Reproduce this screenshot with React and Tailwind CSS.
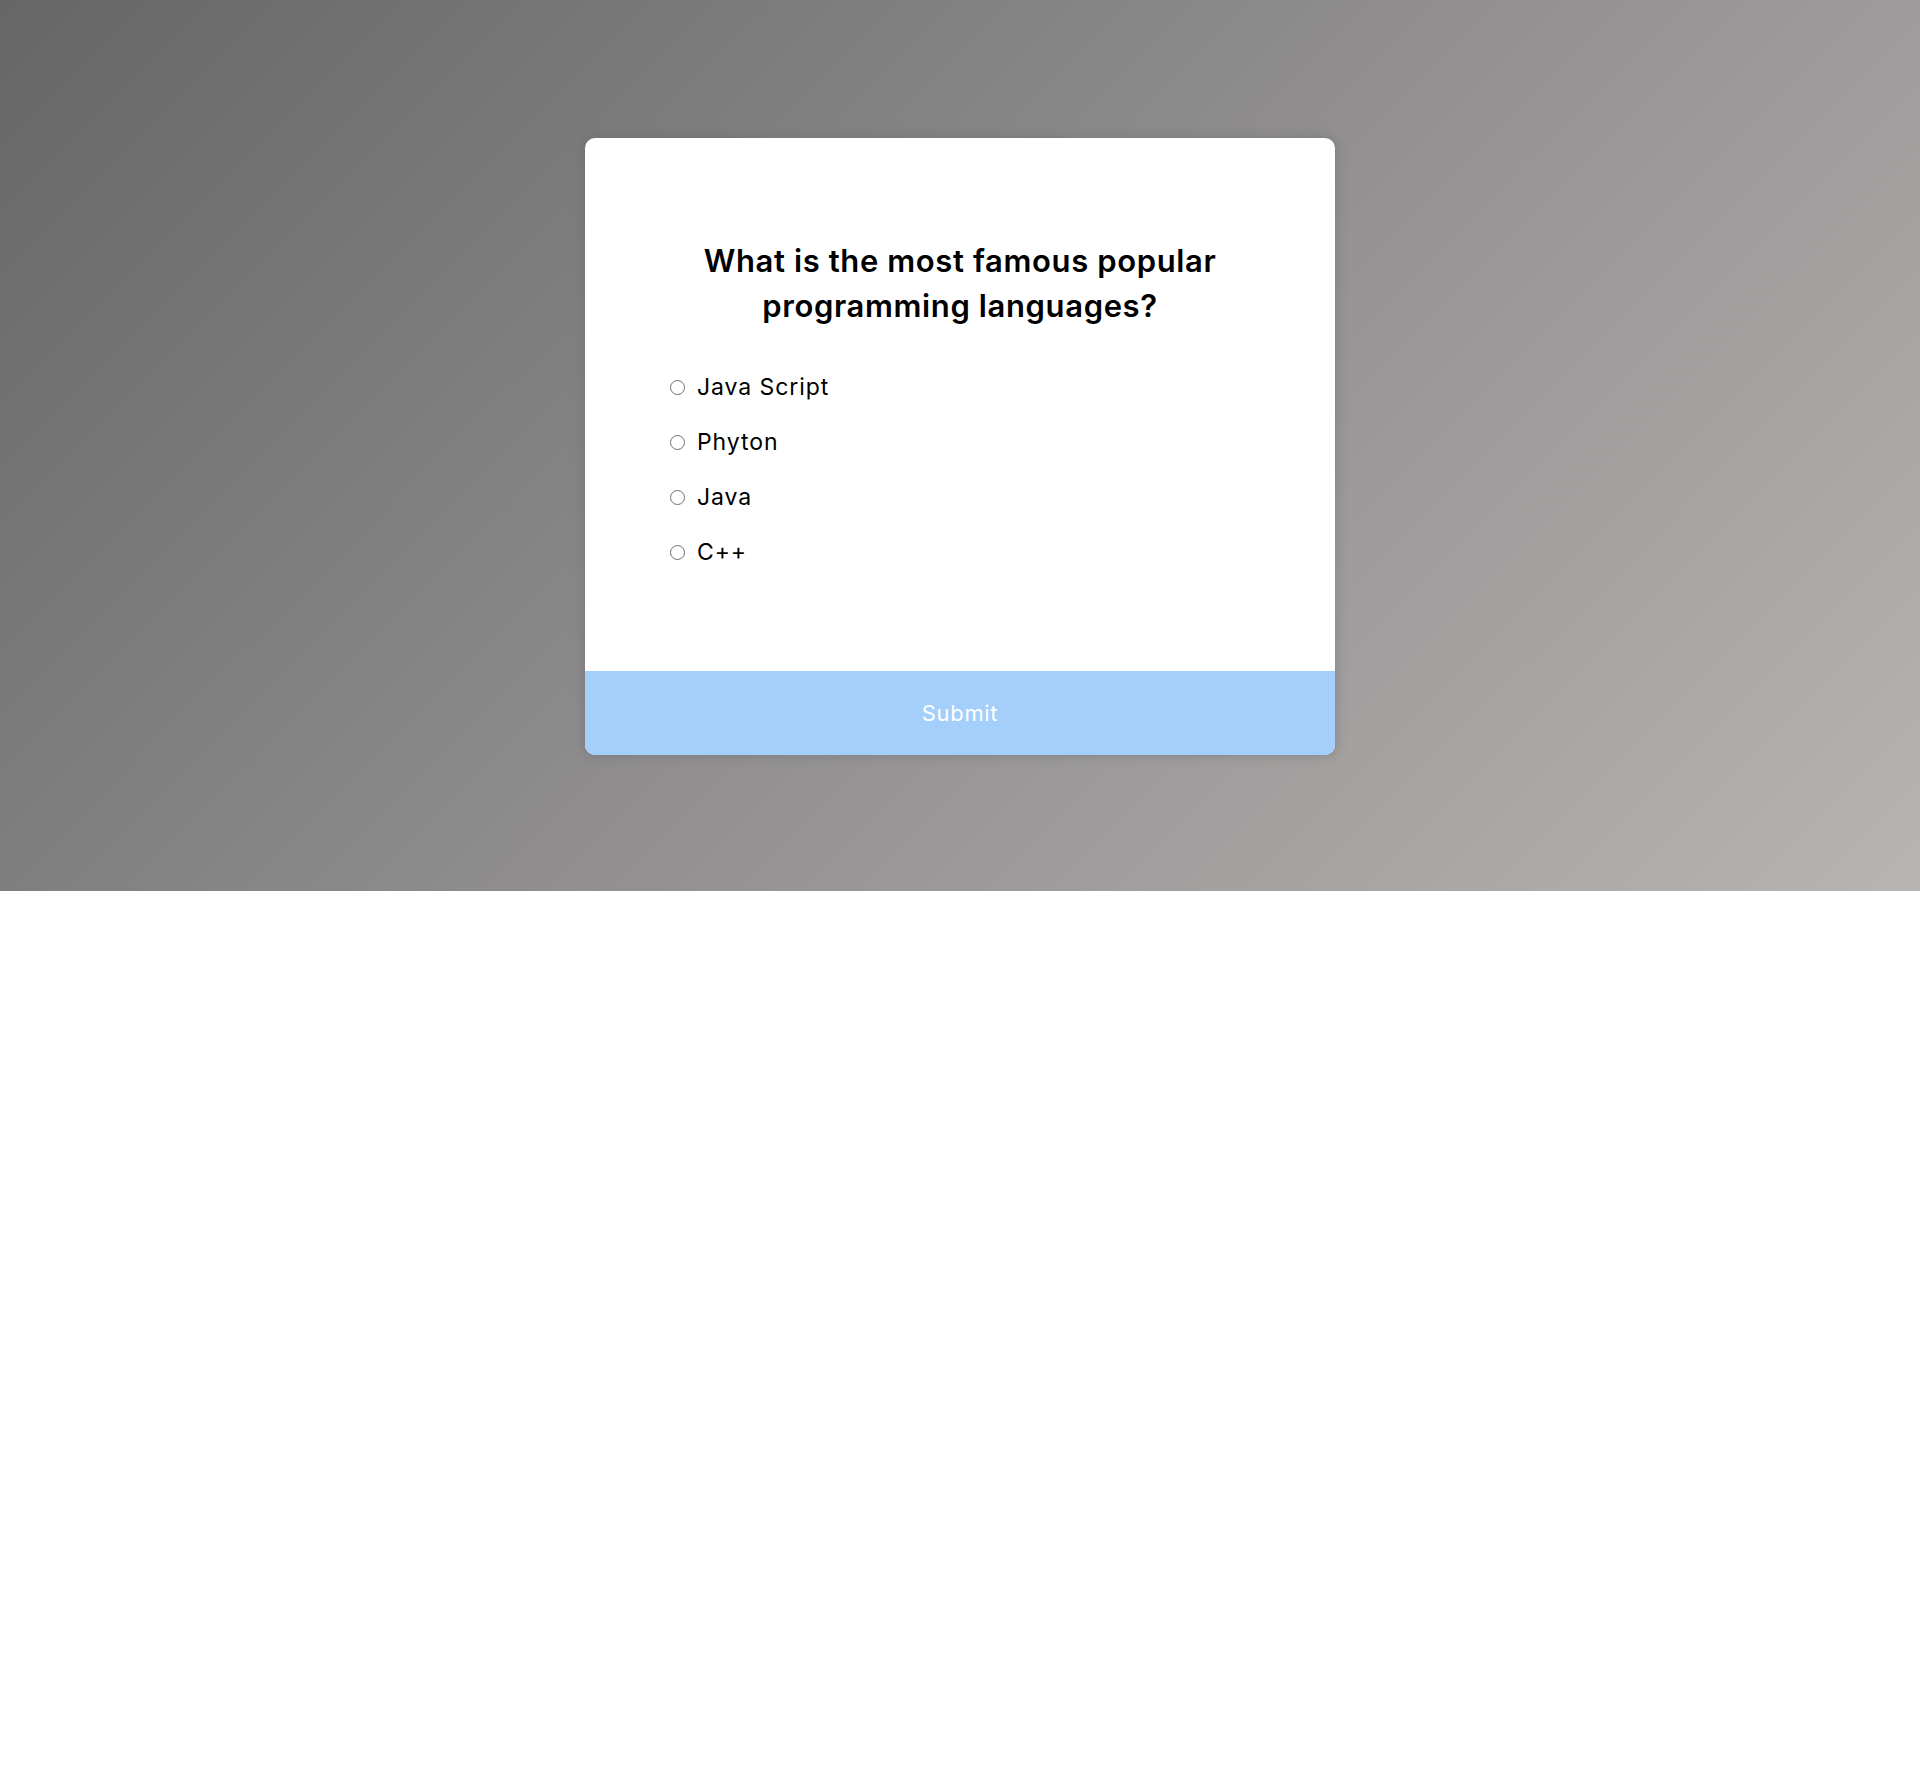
import React, { useState } from "react";

const answers = ["Java Script", "Phyton", "Java", "C++"];

const App = () => {
  const [selected, setSelected] = useState(null);

  return (
    <div className="min-h-[1784px] bg-white font-['Inter','Noto_Sans',sans-serif]">
      {/* gray gradient band with the quiz card */}
      <div className="h-[891px] bg-[linear-gradient(135deg,#666666,#b8b4b4)] flex justify-center pt-[138px]">
        <div className="w-[750px] h-[617px] bg-white rounded-[10px] overflow-hidden shadow-[0_0_10px_2px_rgba(100,100,100,0.35)] flex flex-col">
          <div className="flex-1 pt-[100px]">
            <h2 className="text-center text-[31px] leading-[45px] font-semibold tracking-[0.02em] text-black px-[90px]">
              What is the most famous popular programming languages?
            </h2>
            <ul className="mt-[45px] pl-[85px] flex flex-col gap-[26px]">
              {answers.map((answer, i) => (
                <li key={answer} className="flex items-center h-[29px]">
                  <input
                    type="radio"
                    name="answer"
                    id={"a" + i}
                    checked={selected === i}
                    onChange={() => setSelected(i)}
                    className="appearance-none w-[15px] h-[15px] rounded-full border border-[#6f6f6f] bg-white m-0"
                  />
                  <label htmlFor={"a" + i} className="ml-[12px] text-[23px] tracking-[0.04em] text-black">
                    {answer}
                  </label>
                </li>
              ))}
            </ul>
          </div>
          <button className="h-[84px] w-full bg-[#a3cffa] text-white text-[22px] tracking-[0.03em]">
            Submit
          </button>
        </div>
      </div>
    </div>
  );
};

export default App;
